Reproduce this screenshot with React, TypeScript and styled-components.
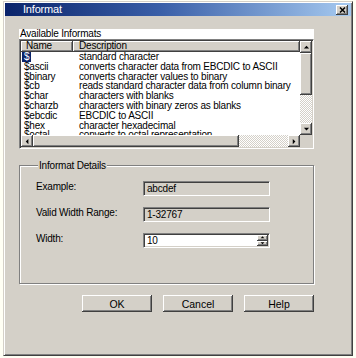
import React from 'react';
import styled, { createGlobalStyle } from 'styled-components';

const GlobalStyle = createGlobalStyle`
  html, body {
    margin: 0;
    padding: 0;
    background: #fffff4;
  }
  body {
    font-family: "Liberation Sans", Arial, sans-serif;
    font-size: 10px;
    color: #000;
  }
`;

const raised = `
  background: #d4d0c8;
  box-shadow: inset -1px -1px #404040, inset 1px 1px #fff, inset -2px -2px #808080;
`;

const Window = styled.div`
  box-sizing: border-box;
  margin: 1px 0 0 3px;
  width: 350px;
  height: 355px;
  padding: 1px;
  background: #d4d0c8;
  border: 1px solid;
  border-color: #d4d0c8 #404040 #404040 #d4d0c8;
  box-shadow: inset 1px 1px #fff, inset -1px -1px #808080;
  display: flex;
  flex-direction: column;
`;

const TitleBar = styled.div`
  height: 13px;
  display: flex;
  align-items: center;
  justify-content: space-between;
  padding: 0 3px 0 18px;
  background: linear-gradient(to right, #0a246a 0%, #3a5fa8 45%, #a6caf0 100%);
`;

const TitleText = styled.span`
  color: #fff;
  font-size: 11px;
  letter-spacing: -0.2px;
  line-height: 13px;
`;

const CloseButton = styled.div`
  ${raised}
  width: 12px;
  height: 10px;
  display: flex;
  align-items: center;
  justify-content: center;
`;

const Body = styled.div`
  padding: 13px 0 0 14px;
  display: flex;
  flex-direction: column;
  width: 295px;
`;

const SectionLabel = styled.div`
  height: 10px;
  line-height: 10px;
  background: #fff;
  padding-left: 1px;
  letter-spacing: -0.2px;
`;

const ListBox = styled.div`
  box-sizing: border-box;
  height: 110px;
  border: 1px solid;
  border-color: #808080 #fff #fff #808080;
  display: grid;
  grid-template-columns: 1fr 12px;
  grid-template-rows: 1fr 12px;
  background: #fff;
  box-shadow: inset 1px 1px #404040, inset -1px -1px #d4d0c8;
  padding: 1px;
`;

const ListMain = styled.div`
  overflow: hidden;
  display: flex;
  flex-direction: column;
`;

const HeaderRow = styled.div`
  display: flex;
  height: 11px;
  flex-shrink: 0;
`;

const HeaderCell = styled.div<{ w?: number }>`
  ${raised}
  box-sizing: border-box;
  ${({ w }) => (w ? `width: ${w}px;` : 'flex: 1;')}
  height: 11px;
  line-height: 10px;
  padding-left: ${({ w }) => (w ? 5 : 6)}px;
  letter-spacing: -0.2px;
`;

const Row = styled.div`
  display: flex;
  height: 9.8px;
  line-height: 10px;
  flex-shrink: 0;
  letter-spacing: -0.2px;
  white-space: nowrap;
`;

const NameCell = styled.div`
  width: 52px;
  padding-left: 1px;
  box-sizing: border-box;
`;

const DescCell = styled.div`
  padding-left: 6px;
`;

const Selected = styled.span<{ active: boolean }>`
  display: inline-block;
  padding: 0 2px;
  background: ${({ active }) => (active ? '#0a246a' : 'transparent')};
  color: ${({ active }) => (active ? '#fff' : '#000')};
`;

const Track = styled.div<{ vertical?: boolean }>`
  display: flex;
  flex-direction: ${({ vertical }) => (vertical ? 'column' : 'row')};
  background-color: #ebe9e4;
  background-image: repeating-conic-gradient(#fff 0 25%, #d4d0c8 0 50%);
  background-size: 2px 2px;
`;

const ScrollButton = styled.div`
  ${raised}
  width: 12px;
  height: 12px;
  flex-shrink: 0;
  display: flex;
  align-items: center;
  justify-content: center;
`;

const Thumb = styled.div<{ size: number; vertical?: boolean }>`
  ${raised}
  flex-shrink: 0;
  ${({ size, vertical }) => (vertical ? `height: ${size}px;` : `width: ${size}px;`)}
`;

const Corner = styled.div`
  background: #d4d0c8;
`;

const GroupBox = styled.fieldset`
  margin: 11px 0 0 0;
  padding: 10px 0 0 16px;
  height: 124px;
  box-sizing: border-box;
  border: 1px solid #808080;
  box-shadow: inset 1px 1px #fff, 1px 1px #fff;
  min-width: 0;
`;

const Legend = styled.legend`
  padding: 0 1px;
  margin-left: 2px;
  background: #d4d0c8;
  letter-spacing: -0.2px;
  line-height: 11px;
`;

const FieldGrid = styled.div`
  display: grid;
  grid-template-columns: 107px 127px;
  row-gap: 11px;
  align-items: center;
`;

const FieldLabel = styled.div`
  letter-spacing: -0.2px;
  padding-bottom: 4px;
`;

const Field = styled.div<{ readOnly?: boolean }>`
  box-sizing: border-box;
  height: 15px;
  border: 1px solid;
  border-color: #808080 #fff #fff #808080;
  box-shadow: inset 1px 1px #404040, inset -1px -1px #d4d0c8;
  background: ${({ readOnly }) => (readOnly ? '#d4d0c8' : '#fff')};
  display: flex;
  align-items: center;
  padding: 1px 1px 1px 3px;
  letter-spacing: -0.2px;
`;

const FieldValue = styled.span`
  flex: 1;
`;

const Spinner = styled.div`
  display: flex;
  flex-direction: column;
  width: 11px;
  height: 11px;
`;

const SpinButton = styled.div`
  ${raised}
  flex: 1;
  display: flex;
  align-items: center;
  justify-content: center;
`;

const ButtonRow = styled.div`
  display: flex;
  justify-content: flex-end;
  gap: 11px;
  margin-top: 11px;
`;

const Button = styled.button`
  width: 70px;
  height: 17px;
  padding: 0;
  border: none;
  ${raised}
  font-family: "Liberation Sans", Arial, sans-serif;
  font-size: 10.5px;
  color: #000;
`;

type Dir = 'up' | 'down' | 'left' | 'right';

const Arrow: React.FC<{ dir: Dir; size?: number }> = ({ dir, size = 7 }) => {
  const pts: Record<Dir, string> = {
    up: '1,5 4,2 7,5',
    down: '1,2 4,5 7,2',
    left: '5,1 2,4 5,7',
    right: '2,1 5,4 2,7',
  };
  return (
    <svg width={size} height={size} viewBox="0 0 8 8">
      <polygon points={pts[dir]} fill="#000" />
    </svg>
  );
};

const informats: [string, string][] = [
  ['$', 'standard character'],
  ['$ascii', 'converts character data from EBCDIC to ASCII'],
  ['$binary', 'converts character values to binary'],
  ['$cb', 'reads standard character data from column binary'],
  ['$char', 'characters with blanks'],
  ['$charzb', 'characters with binary zeros as blanks'],
  ['$ebcdic', 'EBCDIC to ASCII'],
  ['$hex', 'character hexadecimal'],
  ['$octal', 'converts to octal representation'],
];

export default function App() {
  return (
    <>
      <GlobalStyle />
      <Window>
        <TitleBar>
          <TitleText>Informat</TitleText>
          <CloseButton>
            <svg width="7" height="6" viewBox="0 0 7 6">
              <path d="M1 0.5 L6 5.5 M6 0.5 L1 5.5" stroke="#000" strokeWidth="1.5" />
            </svg>
          </CloseButton>
        </TitleBar>
        <Body>
          <SectionLabel>Available Informats</SectionLabel>
          <ListBox>
            <ListMain>
              <HeaderRow>
                <HeaderCell w={52}>Name</HeaderCell>
                <HeaderCell>Description</HeaderCell>
              </HeaderRow>
              {informats.map(([name, desc], i) => (
                <Row key={name}>
                  <NameCell>
                    <Selected active={i === 0}>{name}</Selected>
                  </NameCell>
                  <DescCell>{desc}</DescCell>
                </Row>
              ))}
            </ListMain>
            <Track vertical>
              <ScrollButton>
                <Arrow dir="up" />
              </ScrollButton>
              <Thumb vertical size={42} />
              <div style={{ flex: 1 }} />
              <ScrollButton>
                <Arrow dir="down" />
              </ScrollButton>
            </Track>
            <Track>
              <ScrollButton>
                <Arrow dir="left" />
              </ScrollButton>
              <Thumb size={206} />
              <div style={{ flex: 1 }} />
              <ScrollButton>
                <Arrow dir="right" />
              </ScrollButton>
            </Track>
            <Corner />
          </ListBox>
          <GroupBox>
            <Legend>Informat Details</Legend>
            <FieldGrid>
              <FieldLabel>Example:</FieldLabel>
              <Field readOnly>
                <FieldValue>abcdef</FieldValue>
              </Field>
              <FieldLabel>Valid Width Range:</FieldLabel>
              <Field readOnly>
                <FieldValue>1-32767</FieldValue>
              </Field>
              <FieldLabel>Width:</FieldLabel>
              <Field>
                <FieldValue>10</FieldValue>
                <Spinner>
                  <SpinButton>
                    <Arrow dir="up" size={5} />
                  </SpinButton>
                  <SpinButton>
                    <Arrow dir="down" size={5} />
                  </SpinButton>
                </Spinner>
              </Field>
            </FieldGrid>
          </GroupBox>
          <ButtonRow>
            <Button>OK</Button>
            <Button>Cancel</Button>
            <Button>Help</Button>
          </ButtonRow>
        </Body>
      </Window>
    </>
  );
}
